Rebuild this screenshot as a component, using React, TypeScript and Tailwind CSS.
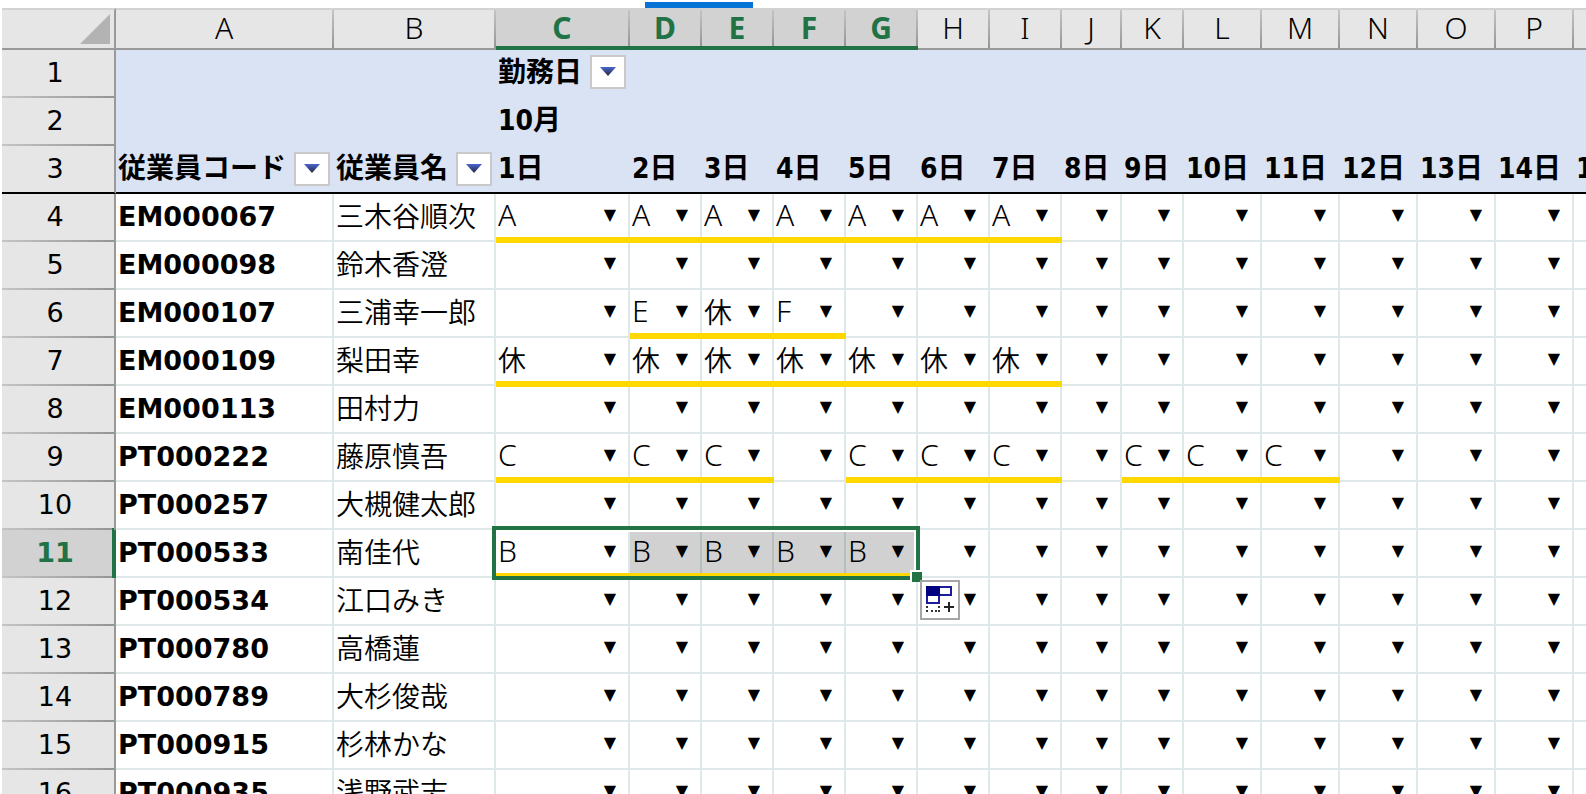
import React from "react";

type Row = { n: number; code: string; name: string; shifts: string[] };

const days = Array.from({ length: 15 }, (_, i) => `${i + 1}日`);
const letters = "ABCDEFGHIJKLMNOP".split("").concat("");
const colWidths = [114, 218, 162, 134, 72, 72, 72, 72, 72, 72, 60, 62, 78, 78, 78, 78, 78];
const options = ["", "A", "B", "C", "D", "E", "F", "休"];

const rows: Row[] = [
  { n: 4, code: "EM000067", name: "三木谷順次", shifts: ["A", "A", "A", "A", "A", "A", "A"] },
  { n: 5, code: "EM000098", name: "鈴木香澄", shifts: [] },
  { n: 6, code: "EM000107", name: "三浦幸一郎", shifts: ["", "E", "休", "F"] },
  { n: 7, code: "EM000109", name: "梨田幸", shifts: ["休", "休", "休", "休", "休", "休", "休"] },
  { n: 8, code: "EM000113", name: "田村力", shifts: [] },
  { n: 9, code: "PT000222", name: "藤原慎吾", shifts: ["C", "C", "C", "", "C", "C", "C", "", "C", "C", "C"] },
  { n: 10, code: "PT000257", name: "大槻健太郎", shifts: [] },
  { n: 11, code: "PT000533", name: "南佳代", shifts: ["B", "B", "B", "B", "B"] },
  { n: 12, code: "PT000534", name: "江口みき", shifts: [] },
  { n: 13, code: "PT000780", name: "高橋蓮", shifts: [] },
  { n: 14, code: "PT000789", name: "大杉俊哉", shifts: [] },
  { n: 15, code: "PT000915", name: "杉林かな", shifts: [] },
  { n: 16, code: "PT000935", name: "浅野武志", shifts: [] },
];

function FilterButton({ label }: { label: string }) {
  return (
    <button
      type="button"
      aria-label={label}
      className="flex h-[34px] w-9 shrink-0 items-center justify-center border-2 border-[#c9c9c9] bg-white"
    >
      <svg viewBox="0 0 16 10" className="h-[10px] w-4">
        <defs>
          <linearGradient id="arrowFill" x1="0" y1="0" x2="0" y2="1">
            <stop offset="0" stopColor="#4a66d0" />
            <stop offset="1" stopColor="#26263c" />
          </linearGradient>
        </defs>
        <path d="M0 0H16L8 9Z" fill="url(#arrowFill)" />
      </svg>
    </button>
  );
}

function RowHead({ n }: { n: number }) {
  const active = n === 11;
  return (
    <th
      scope="row"
      className={
        active
          ? "relative border-r-2 border-[#217346] bg-[#d2d2d2] bg-[linear-gradient(to_right,#c4c4c4,#959595)] bg-[length:100%_2px] bg-bottom bg-no-repeat p-0 pr-1.5 pb-0.5 text-center font-['DejaVu_Sans'] text-[27px] font-bold text-[#217346]"
          : n === 3
            ? "border-r-2 border-b-2 border-r-[#999999] border-b-black bg-[#e6e6e6] p-0 pr-1.5 text-center font-['DejaVu_Sans'] text-[27px] font-normal"
            : "border-r-2 border-[#999999] bg-[#e6e6e6] bg-[linear-gradient(to_right,#c4c4c4,#959595)] bg-[length:100%_2px] bg-bottom bg-no-repeat p-0 pr-1.5 pb-0.5 text-center font-['DejaVu_Sans'] text-[27px] font-normal"
      }
    >
      {active && <span className="absolute -top-0.5 right-0 bottom-0 w-0.5 bg-[#217346]" />}
      {n}
    </th>
  );
}

function Selection() {
  return (
    <div className="pointer-events-none absolute -top-1 -left-1 z-20 h-[54px] w-[428px] border-4 border-[#217346]">
      <div className="absolute top-0 right-0 bottom-0 left-0 border-t-2 border-r-2 border-white" />
      <div className="absolute top-0.5 right-0.5 bottom-[3px] left-[134px] bg-black/[.18]" />
      <div className="absolute -right-1.5 -bottom-1.5 h-3 w-3 border-t-2 border-l-2 border-white bg-[#217346]" />
    </div>
  );
}

function FillOptions() {
  return (
    <button
      type="button"
      aria-label="オートフィル オプション"
      className="absolute top-0.5 left-0.5 z-20 h-10 w-10 border-2 border-[#a6a6a6] bg-white"
    >
      <svg viewBox="0 0 36 36" className="h-9 w-9" fill="none">
        <rect x="5" y="5" width="12" height="16" stroke="#1c1c9c" strokeWidth="2" />
        <rect x="5" y="5" width="24" height="8" stroke="#1c1c9c" strokeWidth="2" />
        <rect x="4" y="4" width="14" height="10" fill="#000080" />
        <path d="M5 24v2M5 28v2M9 29h2M13 29h2M17 24v2M17 28v2" stroke="#333" strokeWidth="2" />
        <path d="M22 25h10M27 20v10" stroke="#222" strokeWidth="2" />
      </svg>
    </button>
  );
}

function ShiftCell({ row, index }: { row: Row; index: number }) {
  const value = row.shifts[index] ?? "";
  return (
    <td className="relative border-r-2 border-b-2 border-[#dfe8e8] p-0">
      <select
        aria-label={`${row.name} ${days[index]}`}
        defaultValue={value}
        className={
          value === "休"
            ? "block h-[46px] w-full appearance-none bg-transparent pb-1 pl-0.5 font-['Noto_Sans_CJK_JP_DemiLight','Noto_Sans_CJK_JP',sans-serif] font-light outline-none"
            : "block h-[46px] w-full appearance-none bg-transparent pb-1 pl-0.5 font-['Noto_Sans','Noto_Sans_CJK_JP',sans-serif] text-[30px] font-light outline-none"
        }
      >
        {options.map((o) => (
          <option key={o} value={o}>
            {o}
          </option>
        ))}
      </select>
      <span className="pointer-events-none absolute top-[13px] right-3 font-[DejaVu_Sans] text-base leading-4">▼</span>
      {value && <div className="absolute -right-0.5 -bottom-[3px] left-0 z-10 h-1.5 bg-[#ffd800]" />}
      {row.n === 11 && index === 0 && <Selection />}
      {row.n === 12 && index === 5 && <FillOptions />}
    </td>
  );
}

export default function App() {
  return (
    <main className="h-screen overflow-hidden bg-white pl-0.5 font-['DejaVu_Sans_Condensed','Noto_Sans_CJK_JP',sans-serif] text-[28px] leading-10 text-black">
      <div className="flex h-2 items-end pl-[643px]">
        <div className="h-1.5 w-[108px] bg-[#0873d6]" />
      </div>
      <table className="w-full min-w-[1648px] table-fixed border-separate border-spacing-0 whitespace-nowrap">
        <colgroup>
          {colWidths.map((w, i) => (
            <col key={i} style={{ width: w }} />
          ))}
          <col />
        </colgroup>
        <thead>
          <tr className="h-[42px] font-['Noto_Sans'] text-[30px]">
            <th className="border-t-2 border-r-2 border-b-2 border-t-[#d2d2d2] border-r-[#999999] border-b-[#999999] bg-[#e6e6e6] p-0">
              <svg viewBox="0 0 30 30" className="mr-1 ml-auto h-[30px] w-[30px]">
                <path d="M30 0V30H0Z" fill="#b3b3b3" />
              </svg>
            </th>
            {letters.map((l, i) => (
              <th
                key={i}
                scope="col"
                className={
                  i >= 2 && i <= 6
                    ? "border-t-2 border-b-4 border-t-[#d2d2d2] border-b-[#217346] bg-[#d2d2d2] bg-[linear-gradient(to_bottom,#c4c4c4,#959595)] bg-[length:2px_100%] bg-right bg-no-repeat p-0 pr-0.5 leading-9 font-bold text-[#217346]"
                    : "border-t-2 border-b-2 border-t-[#d2d2d2] border-b-[#999999] bg-[#e6e6e6] bg-[linear-gradient(to_bottom,#c4c4c4,#959595)] bg-[length:2px_100%] bg-right bg-no-repeat p-0 pr-0.5 pb-0.5 leading-9 font-light"
                }
              >
                {l}
              </th>
            ))}
          </tr>
        </thead>
        <tbody>
          <tr className="h-12 bg-[#dae3f3]">
            <RowHead n={1} />
            <td />
            <td />
            <td colSpan={15} className="p-0 pb-1 pl-0.5">
              <div className="flex items-center gap-2 font-bold">
                <span className="pt-0.5">勤務日</span>
                <FilterButton label="勤務日の絞り込み" />
              </div>
            </td>
          </tr>
          <tr className="h-12 bg-[#dae3f3]">
            <RowHead n={2} />
            <td />
            <td />
            <td colSpan={15} className="p-0 pb-0.5 pl-0.5 font-bold">
              10月
            </td>
          </tr>
          <tr className="h-12 bg-[#dae3f3] font-bold">
            <RowHead n={3} />
            <td className="border-b-2 border-black p-0 pr-1 pl-0.5">
              <div className="flex items-center justify-between">
                従業員コード
                <FilterButton label="従業員コードの絞り込み" />
              </div>
            </td>
            <td className="border-b-2 border-black p-0 pr-1 pl-0.5">
              <div className="flex items-center justify-between">
                従業員名
                <FilterButton label="従業員名の絞り込み" />
              </div>
            </td>
            {days.map((d) => (
              <td key={d} className="overflow-hidden border-b-2 border-black p-0 pl-0.5">
                {d}
              </td>
            ))}
          </tr>
          {rows.map((r) => (
            <tr key={r.n} className="h-12">
              <RowHead n={r.n} />
              <td className="border-r-2 border-b-2 border-[#dfe8e8] p-0 pl-0.5 font-['DejaVu_Sans'] text-[27px] font-bold">
                {r.code}
              </td>
              <td className="border-r-2 border-b-2 border-[#dfe8e8] p-0 pb-1 pl-0.5 font-['Noto_Sans_CJK_JP_DemiLight','Noto_Sans_CJK_JP',sans-serif] font-light">
                {r.name}
              </td>
              {days.map((d, i) => (
                <ShiftCell key={d} row={r} index={i} />
              ))}
            </tr>
          ))}
        </tbody>
      </table>
    </main>
  );
}
